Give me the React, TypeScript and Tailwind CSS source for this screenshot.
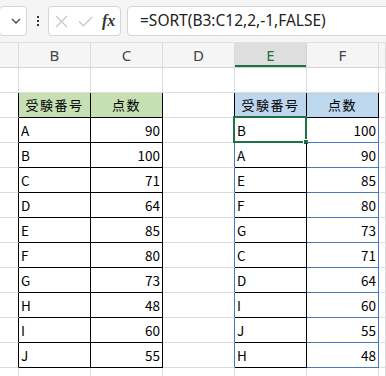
import React from 'react'

type Cell = {
  text?: string
  right?: boolean
  br?: string
  bb?: string
  bg?: string
  sel?: boolean
}

const widths = ['w-[19px]', 'w-[72px]', 'w-[72px]', 'w-[72px]', 'w-[72px]', 'w-[72px]', 'flex-1']
const cols = ['', 'B', 'C', 'D', 'E', 'F', '']

const left = [['A', '90'], ['B', '100'], ['C', '71'], ['D', '64'], ['E', '85'], ['F', '80'], ['G', '73'], ['H', '48'], ['I', '60'], ['J', '55']]
const sorted = [['B', '100'], ['A', '90'], ['E', '85'], ['F', '80'], ['G', '73'], ['C', '71'], ['D', '64'], ['I', '60'], ['J', '55'], ['H', '48']]

const BLACK = 'border-black'
const BLUE = 'border-[#4a78c2]'
const GRID = 'border-[#dcdcdc]'

function buildRows(): Cell[][] {
  const rows: Cell[][] = []
  // row 1
  rows.push([{}, { bb: BLACK }, { bb: BLACK }, {}, { bb: BLACK }, { bb: BLACK }, {}])
  // row 2 header
  rows.push([
    { br: BLACK },
    { text: '受験番号', br: BLACK, bb: BLACK, bg: 'bg-[#c6e0b4]' },
    { text: '点数', br: BLACK, bb: BLACK, bg: 'bg-[#c6e0b4]' },
    { br: BLACK },
    { text: '受験番号', br: BLACK, bb: BLACK, bg: 'bg-[#bdd7ee]' },
    { text: '点数', br: BLACK, bb: BLACK, bg: 'bg-[#bdd7ee]' },
    {},
  ])
  for (let i = 0; i < 10; i++) {
    const last = i === 9
    rows.push([
      { br: BLACK },
      { text: left[i][0], br: BLACK, bb: BLACK },
      { text: left[i][1], right: true, br: BLACK, bb: BLACK },
      { br: BLUE },
      { text: sorted[i][0], br: BLACK, bb: last ? BLUE : BLACK, sel: i === 0 },
      { text: sorted[i][1], right: true, br: BLUE, bb: last ? BLUE : BLACK },
      {},
    ])
  }
  rows.push([{}, {}, {}, {}, {}, {}, {}])
  return rows
}

export default function App() {
  const rows = buildRows()
  return (
    <div className="w-[386px] h-[376px] overflow-hidden bg-white" style={{ fontFamily: '"Noto Sans", "Noto Sans CJK JP", sans-serif' }}>
      {/* formula bar */}
      <div className="h-[43px] bg-[#f5f5f5] border-b border-[#e0e0e0] flex items-center">
        <div className="h-[30px] w-[28px] -ml-[1px] bg-white border border-[#d6d6d6] rounded-[4px] flex items-center justify-end pr-[5px]">
          <svg width="10" height="6" viewBox="0 0 10 6" fill="none" stroke="#444" strokeWidth="1.3">
            <path d="M1 1l4 4 4-4" />
          </svg>
        </div>
        <div className="w-[21px] flex flex-col items-center gap-[2px]">
          <span className="w-[2px] h-[2px] bg-[#333]" />
          <span className="w-[2px] h-[2px] bg-[#333]" />
          <span className="w-[2px] h-[2px] bg-[#333]" />
        </div>
        <div className="h-[30px] w-[73px] bg-white border border-[#d6d6d6] rounded-[4px] flex items-center pl-[6px]">
          <svg width="13" height="13" viewBox="0 0 13 13" fill="none" stroke="#c4c4c4" strokeWidth="1.2">
            <path d="M1 1l11 11M12 1L1 12" />
          </svg>
          <svg className="ml-[10px]" width="15" height="11" viewBox="0 0 15 11" fill="none" stroke="#c4c4c4" strokeWidth="1.2">
            <path d="M1 5.5l4.5 4.5L14 1" />
          </svg>
          <span className="ml-[9px] text-[16px] italic font-bold text-[#333] leading-none" style={{ fontFamily: '"Liberation Serif", serif' }}>
            fx
          </span>
        </div>
        <div className="h-[30px] ml-[6px] flex-1 -mr-[4px] bg-white border border-[#d6d6d6] rounded-[4px] flex items-center pl-[12px] text-[15.5px] text-[#222]">
          =SORT(B3:C12,2,-1,FALSE)
        </div>
      </div>

      {/* column headers */}
      <div className="flex h-[25px] bg-[#f5f5f5] border-b border-[#d4d4d4]">
        {cols.map((c, i) => (
          <div
            key={i}
            className={`${widths[i]} h-full border-r flex items-center justify-center text-[15px] ${
              c === 'E' ? 'bg-[#dedede] text-[#1e7145] border-[#d4d4d4] shadow-[inset_0_-2px_0_#1e7145]' : 'text-[#444] border-[#dcdcdc]'
            }`}
          >
            {c}
          </div>
        ))}
      </div>

      {/* sheet */}
      {rows.map((row, r) => (
        <div key={r} className="flex h-[25px]">
          {row.map((cell, i) => (
            <div
              key={i}
              className={`${widths[i]} relative h-full border-r border-b ${cell.br ?? GRID} ${cell.bb ? cell.bb.replace('border-', 'border-b-') : 'border-b-[#dcdcdc]'} ${cell.bg ?? ''} flex items-center text-black ${
                cell.bg ? 'justify-center text-[13px] tracking-[1.5px] text-[#222]' : cell.right ? 'justify-end pr-[2px] text-[13.5px]' : 'pl-[2px] text-[13.5px]'
              }`}
              style={{ fontFamily: '"Noto Sans CJK JP", sans-serif' }}
            >
              {cell.text}
              {cell.sel && (
                <div className="absolute -left-[2px] -top-[2px] w-[74px] h-[27px] border-2 border-[#1e7145]">
                  <div className="absolute -right-[4px] -bottom-[4px] w-[6px] h-[6px] bg-[#1e7145] border border-white" />
                </div>
              )}
            </div>
          ))}
        </div>
      ))}
    </div>
  )
}
